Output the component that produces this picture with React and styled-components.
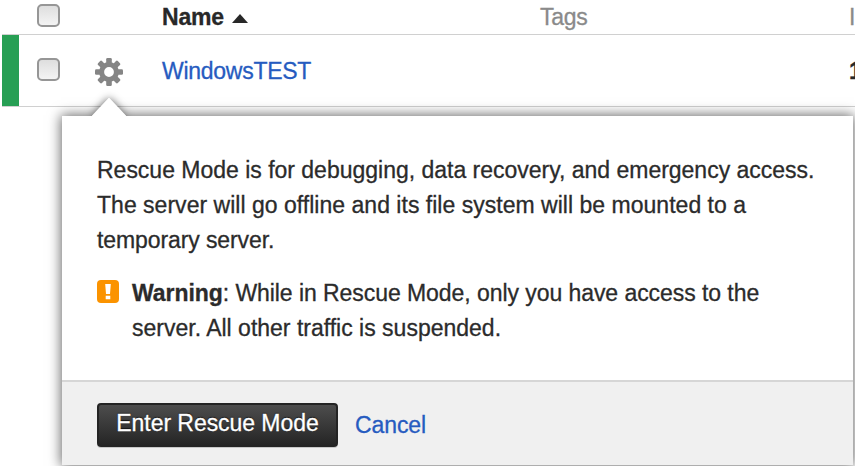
import React from "react";
import styled, { createGlobalStyle } from "styled-components";

const GlobalStyle = createGlobalStyle`
  * { box-sizing: border-box; }
  body {
    margin: 0;
    overflow: hidden;
    background: #fff;
    color: #2b2b2b;
    font: 23px/35.2px "Liberation Sans", Arial, sans-serif;
    -webkit-text-stroke: 0.3px currentColor;
  }
`;

const Page = styled.main`
  position: relative;
  width: 855px;
  height: 466px;
  overflow: hidden;
`;

const Row = styled.div`
  display: grid;
  grid-template-columns: 17px 18px 23px 36px 29px 37px 378px 309px 6px;
  align-items: center;
  width: 853px;
  margin-left: 2px;
  height: ${(p) => p.$height}px;
  border-bottom: 1px solid #d0d0d0;
  white-space: nowrap;
`;

const Status = styled.div`
  grid-column: 1;
  align-self: stretch;
  background: #279f54;
`;

const Checkbox = styled.input.attrs({ type: "checkbox" })`
  appearance: none;
  grid-column: 3;
  width: 23px;
  height: 23px;
  margin: 0;
  margin-top: ${(p) => p.$shift}px;
  border: 2px solid #969696;
  border-radius: 5px;
  background: linear-gradient(#dedede, #f4f4f4);
`;

const Gear = styled.svg`
  grid-column: 5;
  width: 28px;
  height: 28px;
  margin: 3px 0 0 -1px;
`;

const Cell = styled.div`
  grid-column: ${(p) => p.$column};
  color: ${(p) => p.$color};
  font-weight: ${(p) => (p.$bold ? 700 : 400)};
  letter-spacing: ${(p) => p.$track || 0}px;
  line-height: 26px;
`;

const NameHeading = styled(Cell)`
  display: flex;
  align-items: center;
  gap: 8px;
`;

const SortArrow = styled.svg`
  width: 16px;
  height: 9px;
  margin-top: 3px;
`;

const Popover = styled.section`
  position: absolute;
  left: 62px;
  top: 116px;
  width: 791px;
  height: 349px;
  display: flex;
  flex-direction: column;
  background: #fff;
  box-shadow: 0 0 12px 1px rgba(0, 0, 0, 0.6);
`;

const Pointer = styled.svg`
  position: absolute;
  left: 27px;
  top: -20px;
  width: 40px;
  height: 21px;
  overflow: visible;
`;

const Body = styled.div`
  height: 264px;
  padding: 37px 35px 0;
`;

const Line = styled.span`
  display: block;
  width: max-content;
  white-space: nowrap;
  letter-spacing: ${(p) => p.$track || 0}px;
`;

const Paragraph = styled.p`
  margin: 0;
`;

const Warning = styled.div`
  display: flex;
  gap: 13px;
  margin-top: 17px;
`;

const WarningIcon = styled.svg`
  width: 22px;
  height: 23px;
  margin-top: 4px;
  flex: none;
`;

const Footer = styled.footer`
  display: flex;
  align-items: flex-start;
  flex: 1;
  gap: 17px;
  padding: 21px 35px 0;
  border-top: 2px solid #d6d6d6;
  background: #f0f0f0;
`;

const PrimaryButton = styled.button`
  width: 241px;
  height: 44px;
  padding: 0 0 5px;
  border: 2px solid #242424;
  border-radius: 4px;
  background: linear-gradient(#4d4d4d, #252525);
  box-shadow: 0 1px 0 #c8c8c8;
  color: #fff;
  font: inherit;
  line-height: 30px;
  letter-spacing: -0.05px;
  white-space: nowrap;
  text-shadow: 0 -1px 1px #111;
`;

const Cancel = styled.span`
  color: #265bc0;
  line-height: 44px;
  letter-spacing: -0.1px;
`;

const TEETH = [0, 45, 90, 135, 180, 225, 270, 315];

export default function App() {
  return (
    <>
      <GlobalStyle />
      <Page>
        <Row $height={35}>
          <Checkbox aria-label="Select all" $shift={-3} />
          <NameHeading $column={7} $color="#282828" $track={-0.2} $bold>
            Name
            <SortArrow viewBox="0 0 16 9">
              <path d="M0 9 8 0l8 9z" fill="#282828" />
            </SortArrow>
          </NameHeading>
          <Cell $column={8} $color="#8a8a8a" $track={-0.3}>Tags</Cell>
          <Cell $column={9} $color="#8a8a8a">I</Cell>
        </Row>
        <Row $height={72}>
          <Status />
          <Checkbox aria-label="Select WindowsTEST" $shift={-2} />
          <Gear viewBox="-14 -14 28 28">
            <g fill="#858585">
              {TEETH.map((angle) => (
                <rect key={angle} x="-2.8" y="-14" width="5.6" height="7" rx="1.3" transform={`rotate(${angle})`} />
              ))}
            </g>
            <circle r="7.4" fill="none" stroke="#858585" strokeWidth="5" />
          </Gear>
          <Cell $column={7} $color="#265bc0" $track={-0.27}>WindowsTEST</Cell>
          <Cell $column={9} $color="#282828" $bold>1</Cell>
        </Row>
        <Popover>
          <Pointer viewBox="0 0 40 21">
            <defs>
              <filter id="pointer-shadow" x="-50%" y="-70%" width="200%" height="200%">
                <feDropShadow dx="0" dy="0" stdDeviation="4" floodOpacity=".65" />
              </filter>
              <clipPath id="pointer-clip"><path d="M-20-20h80v40h-80z" /></clipPath>
            </defs>
            <g clipPath="url(#pointer-clip)">
              <path d="M2 21 20 2l18 19z" fill="#fff" filter="url(#pointer-shadow)" />
            </g>
            <path d="M2 21 20 2l18 19z" fill="#fff" />
          </Pointer>
          <Body>
            <Paragraph>
              <Line $track={-0.01}>Rescue Mode is for debugging, data recovery, and emergency access.</Line>
              <Line $track={0.02}>The server will go offline and its file system will be mounted to a</Line>
              <Line $track={-0.1}>temporary server.</Line>
            </Paragraph>
            <Warning>
              <WarningIcon viewBox="0 0 22 23">
                <rect width="22" height="23" rx="4" fill="#fb9300" />
                <path d="M8.2 4h5.6l-.8 10H9zM8.7 15.8h4.6v3.4H8.7z" fill="#fff" />
              </WarningIcon>
              <Paragraph>
                <Line $track={-0.06}><b>Warning</b>: While in Rescue Mode, only you have access to the</Line>
                <Line>server. All other traffic is suspended.</Line>
              </Paragraph>
            </Warning>
          </Body>
          <Footer>
            <PrimaryButton>Enter Rescue Mode</PrimaryButton>
            <Cancel>Cancel</Cancel>
          </Footer>
        </Popover>
      </Page>
    </>
  );
}
